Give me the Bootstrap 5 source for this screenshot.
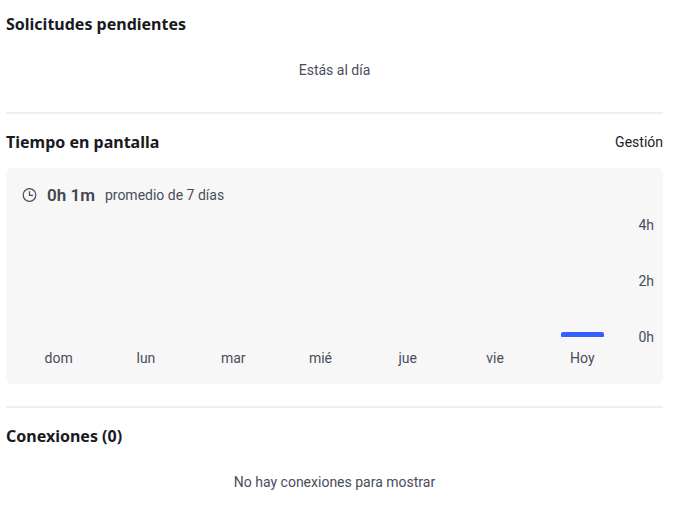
<!DOCTYPE html>
<html lang="es">
<head>
<meta charset="utf-8">
<meta name="viewport" content="width=device-width, initial-scale=1">
<title>Tiempo en pantalla</title>
<link href="https://cdn.jsdelivr.net/npm/bootstrap@5.3.0/dist/css/bootstrap.min.css" rel="stylesheet">
<style>
body { font-family: Roboto, "Liberation Sans", sans-serif; font-size: 14px; line-height: 20px; color: #494d5a; background: #fff; }
main { padding: 12px 37px 0 6px; }
.section-title { font-family: "Noto Sans", sans-serif; font-size: 16px; line-height: 24px; font-weight: 700; color: #191a1f; }
.empty-note { padding: 24px 0 32px; }
.section-rule { height: 2px; border: 0; background: #eeeeef; opacity: 1; margin: 0 0 16px; }
.manage-link { color: #202227; }
.usage-panel { background: #f7f7f8; border-radius: 6px; margin: 14px 0 22px; padding: 15px 9px 16px; }
.usage-summary { gap: 10px; padding: 0 7px; margin-bottom: 8px; }
.usage-total { font-size: 17px; line-height: 24px; font-weight: 600; color: #43454d; }
.day-track { height: 122px; margin-bottom: 11px; }
.day-bar { width: 43px; background: #335fff; border-radius: 2px 2px 1px 1px; }
.hour-axis { width: 28px; height: 132px; }
</style>
<script src="https://cdn.jsdelivr.net/npm/bootstrap@5.3.0/dist/js/bootstrap.bundle.min.js" defer></script>
</head>
<body>
<main>
  <section>
    <h2 class="section-title mb-0">Solicitudes pendientes</h2>
    <p class="empty-note text-center mb-0">Estás al día</p>
  </section>
  <hr class="section-rule">
  <section>
    <div class="d-flex justify-content-between align-items-center">
      <h2 class="section-title mb-0">Tiempo en pantalla</h2>
      <a class="manage-link text-decoration-none" href="#">Gestión</a>
    </div>
    <div class="usage-panel">
      <div class="usage-summary d-flex align-items-center">
        <svg width="15" height="15" viewBox="0 0 15 15" fill="none" stroke="#4b4d55" stroke-width="1.2" aria-hidden="true"><circle cx="7.5" cy="7" r="6.3"/><path d="M7.5 3.3V7.3H11"/></svg>
        <strong class="usage-total">0h 1m</strong>
        <span>promedio de 7 días</span>
      </div>
      <div class="d-flex">
        <div class="row g-0 flex-fill text-center">
          <div class="col"><div class="day-track"></div>dom</div>
          <div class="col"><div class="day-track"></div>lun</div>
          <div class="col"><div class="day-track"></div>mar</div>
          <div class="col"><div class="day-track"></div>mié</div>
          <div class="col"><div class="day-track"></div>jue</div>
          <div class="col"><div class="day-track"></div>vie</div>
          <div class="col"><div class="day-track d-flex align-items-end justify-content-center"><div class="day-bar" style="height:5px"></div></div>Hoy</div>
        </div>
        <div class="hour-axis d-flex flex-column justify-content-between text-end">
          <span>4h</span><span>2h</span><span>0h</span>
        </div>
      </div>
    </div>
  </section>
  <hr class="section-rule">
  <section>
    <h2 class="section-title mb-0">Conexiones (0)</h2>
    <p class="empty-note text-center mb-0">No hay conexiones para mostrar</p>
  </section>
</main>
</body>
</html>
